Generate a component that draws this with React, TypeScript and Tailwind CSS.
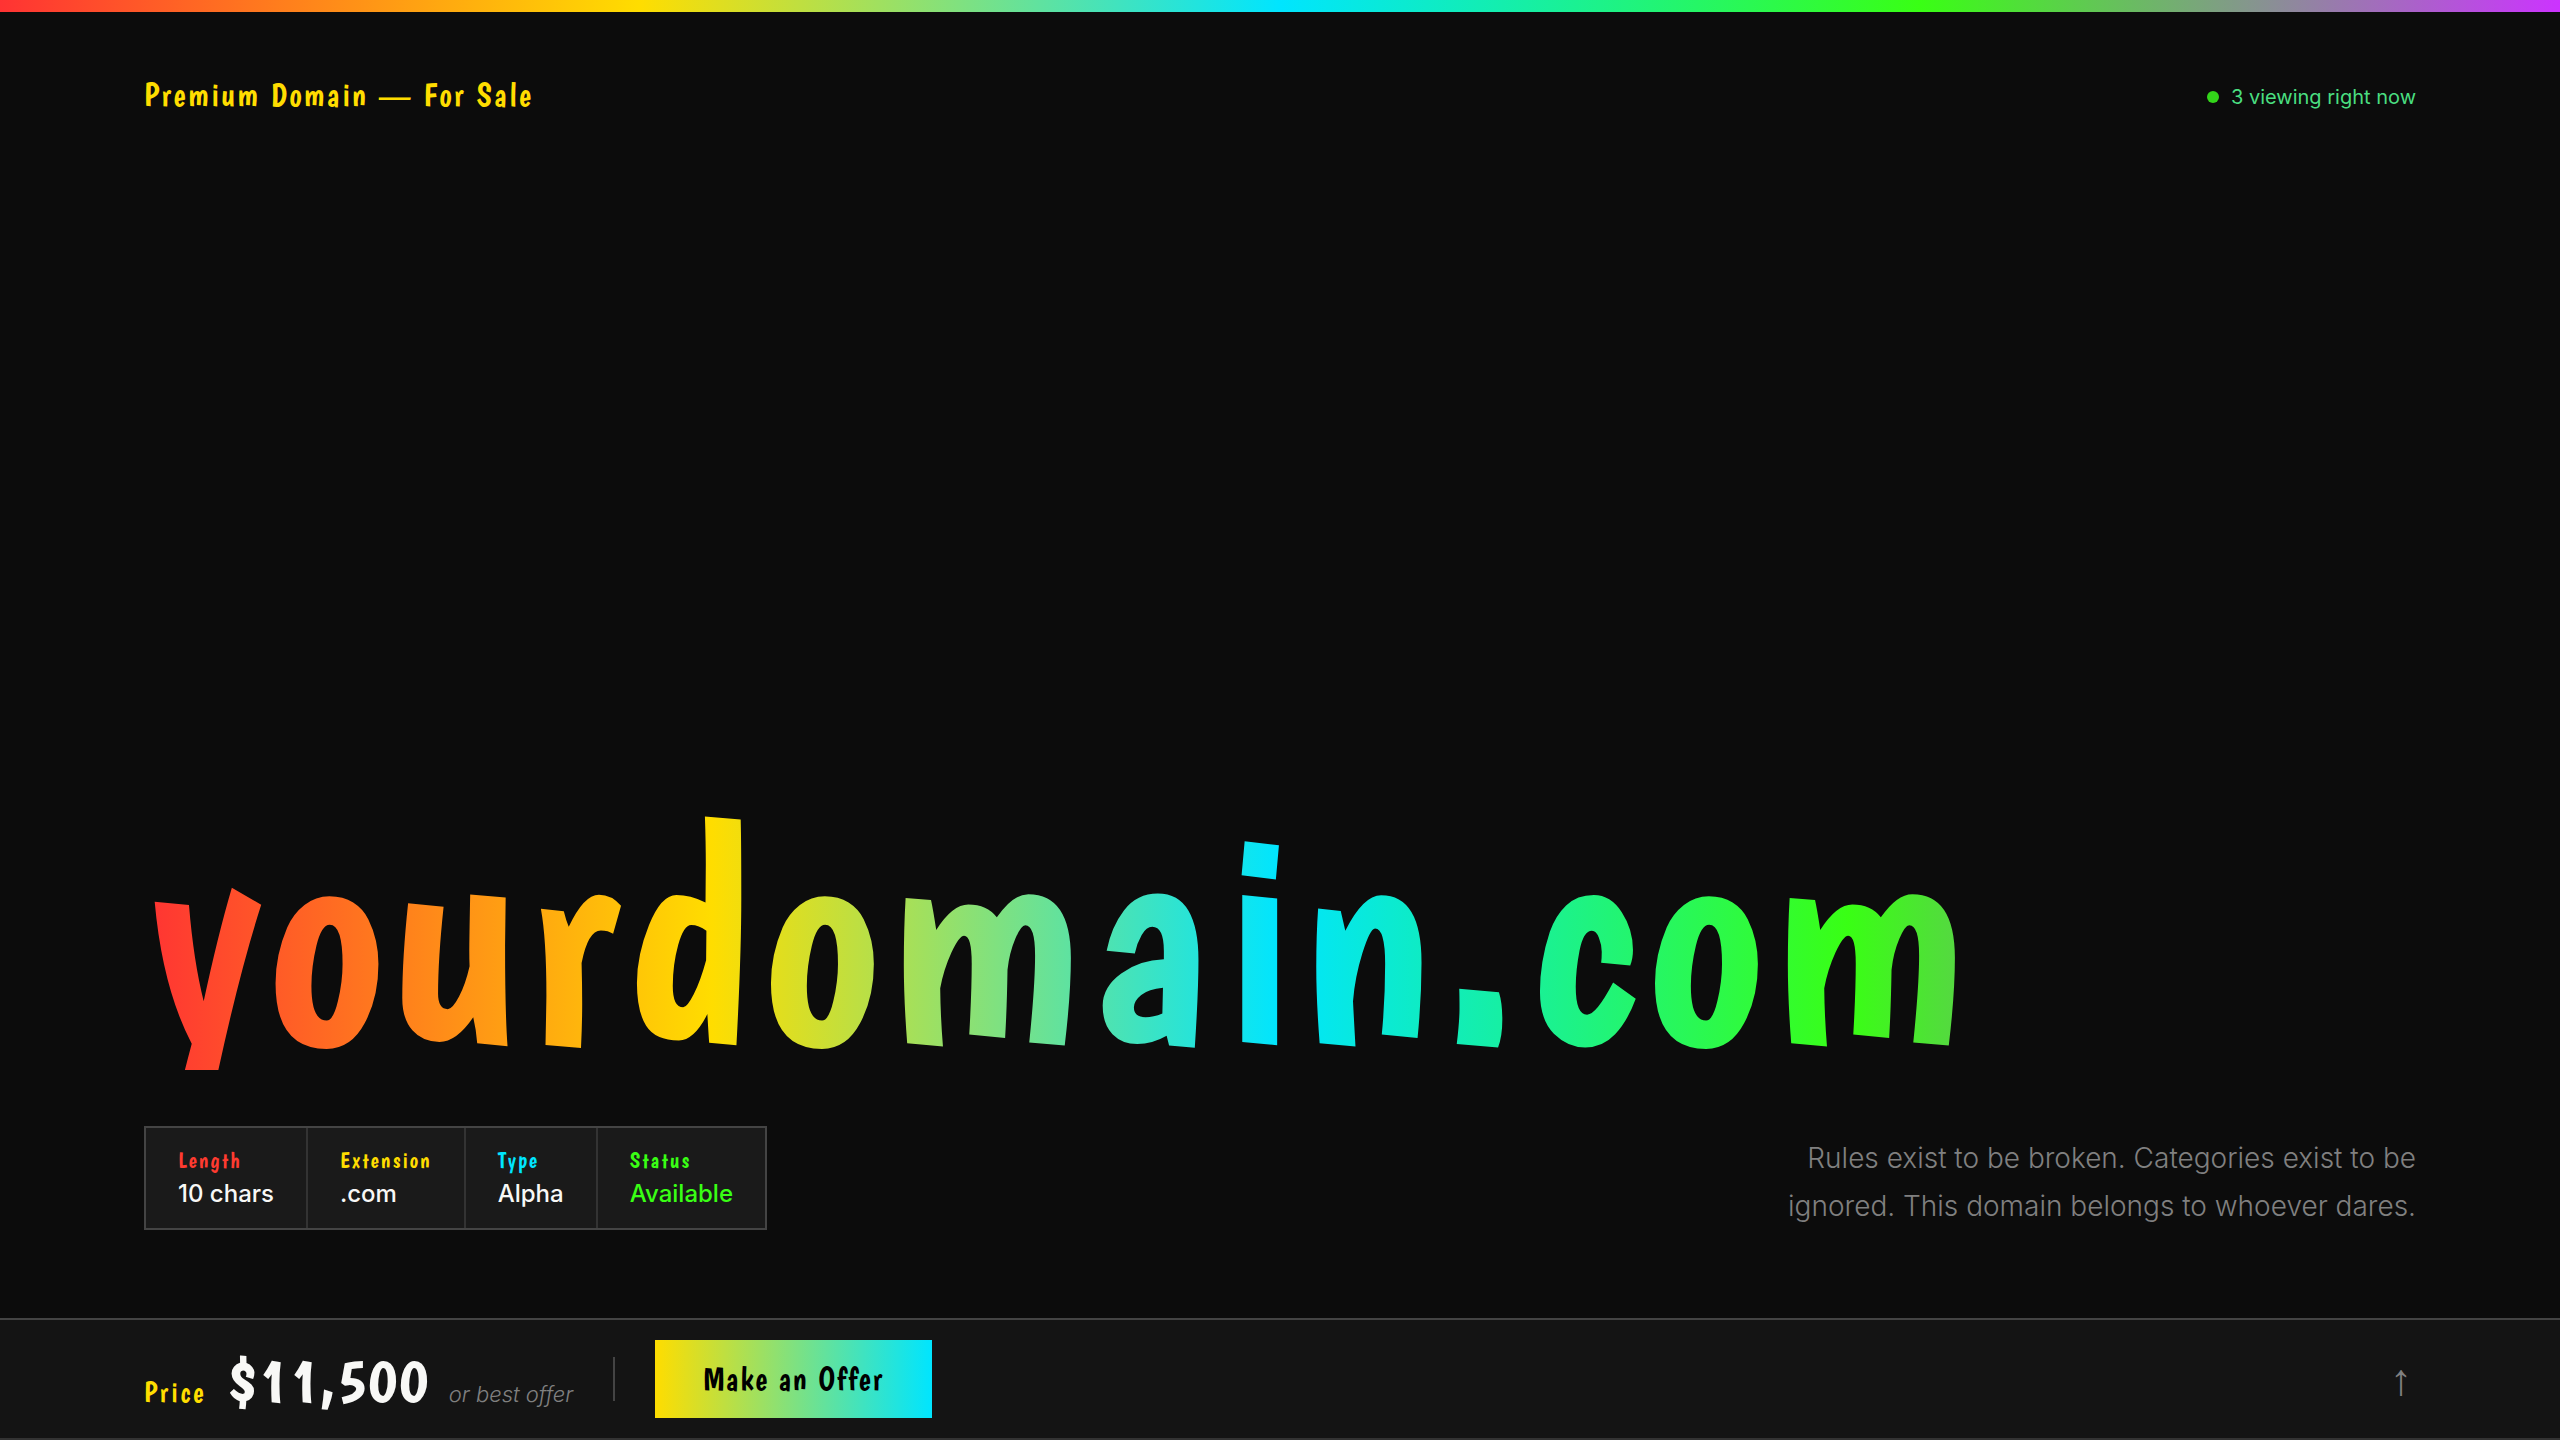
import { clsx } from "clsx";

const display = "font-['Boogaloo',sans-serif] font-normal";

const spectrum =
  "bg-[linear-gradient(90deg,#ff3333_0%,#ffdd00_25%,#00e5ff_50%,#39ff14_75%,#cc33ff_100%)]";

interface Stat {
  label: string;
  value: string;
  labelColor: string;
  valueColor: string;
}

const stats: Stat[] = [
  { label: "Length", value: "10 chars", labelColor: "text-[#ff3b30]", valueColor: "text-[#f8f8f6]" },
  { label: "Extension", value: ".com", labelColor: "text-[#ffdd00]", valueColor: "text-[#f8f8f6]" },
  { label: "Type", value: "Alpha", labelColor: "text-[#00e5ff]", valueColor: "text-[#f8f8f6]" },
  { label: "Status", value: "Available", labelColor: "text-[#39ff14]", valueColor: "text-[#39ff14]" },
];

export default function App() {
  return (
    <div className="flex min-h-screen flex-col bg-[#0c0c0c] font-['Inter',sans-serif] text-[#f8f8f6]">
      <div className={clsx("h-3", spectrum)} />

      <header className="flex items-center justify-between px-36 pt-16">
        <p className={clsx(display, "text-[32px] leading-[38px] tracking-[0.08em] text-[#ffdd00]")}>
          Premium Domain — For Sale
        </p>
        <p className="flex items-center gap-3 pt-1 text-xl text-[#4ade80]">
          <span className="size-3 rounded-full bg-[#33d51a]" />
          3 viewing right now
        </p>
      </header>

      <main className="flex flex-1 flex-col justify-end px-36 pb-[88px]">
        <h1
          className={clsx(
            display,
            spectrum,
            "bg-clip-text text-[306px] leading-[272px] tracking-[0.03em] text-transparent",
          )}
        >
          yourdomain.com
        </h1>

        <div className="mt-14 flex items-center justify-between">
          <dl className="flex border-2 border-[#444444] bg-[#1a1a1a]">
            {stats.map((stat) => (
              <StatCell key={stat.label} {...stat} />
            ))}
          </dl>
          <p className="max-w-[640px] pt-2 text-right text-[28px] leading-12 font-light text-[#808080]">
            Rules exist to be broken. Categories exist to be ignored. This domain belongs to
            whoever dares.
          </p>
        </div>
      </main>

      <OfferBar />
    </div>
  );
}

function StatCell({ label, value, labelColor, valueColor }: Stat) {
  return (
    <div className="border-r-2 border-[#333333] px-8 py-5 last:border-r-0">
      <dt className={clsx(display, "mb-2 text-[22px] leading-6 tracking-[0.1em]", labelColor)}>
        {label}
      </dt>
      <dd className={clsx("text-2xl leading-7 font-medium", valueColor)}>{value}</dd>
    </div>
  );
}

function OfferBar() {
  return (
    <footer className="flex items-center justify-between border-t-2 border-b-2 border-t-[#444444] border-b-[#333333] bg-[#141414] px-36 py-5">
      <div className="flex items-center">
        <p className="flex items-baseline pt-0.5">
          <span className={clsx(display, "text-[28px] tracking-[0.1em] text-[#ffdd00]")}>Price</span>
          <span className={clsx(display, "ml-5 text-[64px] leading-[72px]")}>$11,500</span>
          <span className="ml-5 text-[22px] font-light text-[#808080] italic">or best offer</span>
        </p>
        <span className="mx-10 h-11 w-0.5 bg-[#444444]" />
        <button
          type="button"
          className={clsx(
            display,
            "h-[78px] bg-[linear-gradient(90deg,#ffdd00,#00e5ff)] px-12 text-[32px] tracking-[0.06em] text-black",
          )}
        >
          Make an Offer
        </button>
      </div>
      <a
        href="#top"
        aria-label="Back to top"
        className={clsx(display, "px-1 pt-0.5 text-[44px] leading-none text-[#808080]")}
      >
        ↑
      </a>
    </footer>
  );
}
